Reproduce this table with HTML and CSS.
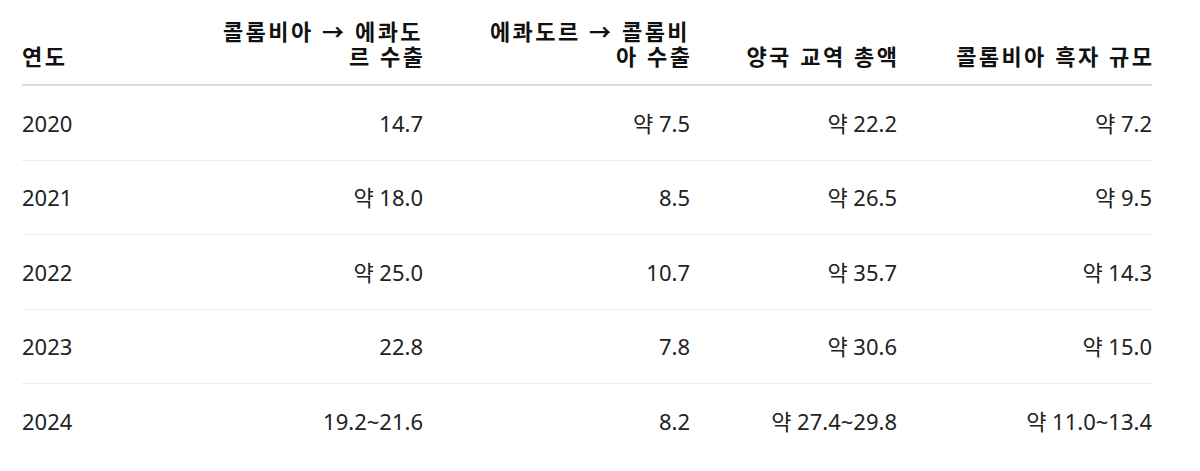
FILE: index.html
```html
<!DOCTYPE html>
<html lang="ko">
<head>
<meta charset="utf-8">
<title>콜롬비아–에콰도르 교역</title>
<link rel="stylesheet" href="styles.css">
</head>
<body>
<div class="wrap">
<table class="trade">
  <colgroup>
    <col class="c1"><col class="c2"><col class="c3"><col class="c4"><col class="c5">
  </colgroup>
  <thead>
    <tr>
      <th class="left"><span class="h">연도</span></th>
      <th><span class="h">콜롬비아 → 에콰도<br>르 수출</span></th>
      <th><span class="h">에콰도르 → 콜롬비<br>아 수출</span></th>
      <th><span class="h">양국 교역 총액</span></th>
      <th><span class="h">콜롬비아 흑자 규모</span></th>
    </tr>
  </thead>
  <tbody>
    <tr><td class="left">2020</td><td>14.7</td><td>약 7.5</td><td>약 22.2</td><td>약 7.2</td></tr>
    <tr><td class="left">2021</td><td>약 18.0</td><td>8.5</td><td>약 26.5</td><td>약 9.5</td></tr>
    <tr><td class="left">2022</td><td>약 25.0</td><td>10.7</td><td>약 35.7</td><td>약 14.3</td></tr>
    <tr><td class="left">2023</td><td>22.8</td><td>7.8</td><td>약 30.6</td><td>약 15.0</td></tr>
    <tr><td class="left">2024</td><td>19.2~21.6</td><td>8.2</td><td>약 27.4~29.8</td><td>약 11.0~13.4</td></tr>
  </tbody>
</table>
</div>
</body>
</html>
```

FILE: styles.css
```css
html, body {
  margin: 0;
  padding: 0;
  background: #ffffff;
}

body {
  font-family: "Noto Sans", "Noto Sans CJK KR", sans-serif;
  color: #222222;
}

.wrap {
  padding: 0 48px 0 22px;
}

.trade {
  width: 1130px;
  border-collapse: collapse;
  table-layout: fixed;
}

.c1 { width: 200px; }
.c2 { width: 201px; }
.c3 { width: 267px; }
.c4 { width: 207px; }
.c5 { width: 255px; }

.trade th {
  font-family: "Noto Sans CJK KR", "Noto Sans", sans-serif;
  font-weight: 700;
  font-size: 22px;
  line-height: 25px;
  color: #111111;
  text-align: right;
  vertical-align: bottom;
  white-space: nowrap;
  padding: 18px 0 16px;
  border-bottom: 2px solid #dcdcdc;
}

.trade th .h {
  letter-spacing: 2.4px;
  margin-right: -2.4px;
}

.trade th.left .h {
  margin-right: 0;
}

.trade td {
  font-size: 22px;
  line-height: 30px;
  text-align: right;
  padding: 21.5px 0 22px;
  border-bottom: 1px solid #ececec;
  white-space: nowrap;
}

.trade tbody tr:last-child td {
  border-bottom: none;
}

.trade .left {
  text-align: left;
}
```
